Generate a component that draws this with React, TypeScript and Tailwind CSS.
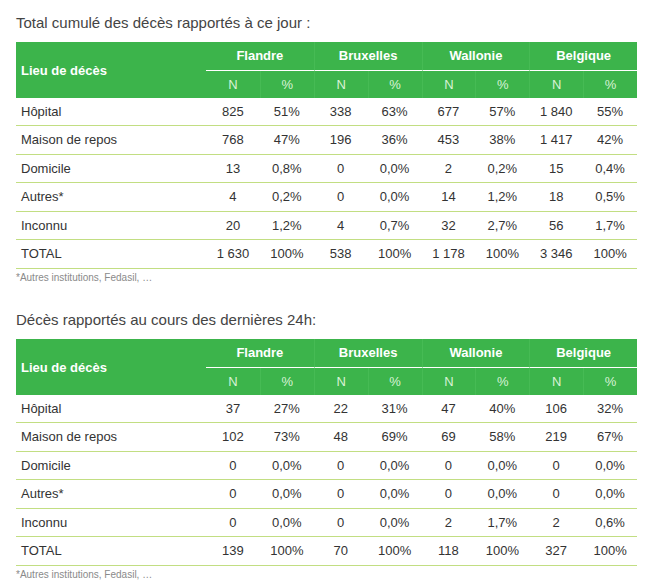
import React from "react";

type Row = { label: string; vals: string[] };

const t1: Row[] = [
  { label: "Hôpital", vals: ["825", "51%", "338", "63%", "677", "57%", "1 840", "55%"] },
  { label: "Maison de repos", vals: ["768", "47%", "196", "36%", "453", "38%", "1 417", "42%"] },
  { label: "Domicile", vals: ["13", "0,8%", "0", "0,0%", "2", "0,2%", "15", "0,4%"] },
  { label: "Autres*", vals: ["4", "0,2%", "0", "0,0%", "14", "1,2%", "18", "0,5%"] },
  { label: "Inconnu", vals: ["20", "1,2%", "4", "0,7%", "32", "2,7%", "56", "1,7%"] },
  { label: "TOTAL", vals: ["1 630", "100%", "538", "100%", "1 178", "100%", "3 346", "100%"] },
];

const t2: Row[] = [
  { label: "Hôpital", vals: ["37", "27%", "22", "31%", "47", "40%", "106", "32%"] },
  { label: "Maison de repos", vals: ["102", "73%", "48", "69%", "69", "58%", "219", "67%"] },
  { label: "Domicile", vals: ["0", "0,0%", "0", "0,0%", "0", "0,0%", "0", "0,0%"] },
  { label: "Autres*", vals: ["0", "0,0%", "0", "0,0%", "0", "0,0%", "0", "0,0%"] },
  { label: "Inconnu", vals: ["0", "0,0%", "0", "0,0%", "2", "1,7%", "2", "0,6%"] },
  { label: "TOTAL", vals: ["139", "100%", "70", "100%", "118", "100%", "327", "100%"] },
];

const regions = ["Flandre", "Bruxelles", "Wallonie", "Belgique"];

function Block({ title, rows }: { title: string; rows: Row[] }) {
  return (
    <div className="pl-[16px]">
      <div className="h-[42px] pt-[14px] text-[15px] leading-[18px] text-[#444]">{title}</div>
      <div className="grid w-[621px] grid-cols-[190px_repeat(8,minmax(0,1fr))]">
        <div className="row-span-2 flex items-center bg-[#3cb44b] pl-[5px] pt-[1px] text-[13px] font-bold text-white">
          Lieu de décès
        </div>
        {regions.map((r, i) => (
          <div
            key={r}
            className={`col-span-2 flex h-[29px] items-center justify-center border-b border-white bg-[#3cb44b] text-[13px] font-bold text-white ${
              i > 0 ? "border-l border-l-[#46bb54]" : ""
            }`}
          >
            {r}
          </div>
        ))}
        {regions.map((r, i) => (
          <React.Fragment key={r + "s"}>
            <div
              className={`flex h-[27px] items-center justify-center bg-[#3cb44b] text-[13px] text-[#d9f2d6] ${
                i > 0 ? "border-l border-l-[#46bb54]" : ""
              }`}
            >
              N
            </div>
            <div className="flex h-[27px] items-center justify-center border-l border-l-[#46bb54] bg-[#3cb44b] text-[13px] text-[#d9f2d6]">
              %
            </div>
          </React.Fragment>
        ))}
        {rows.map((row, ri) => (
          <React.Fragment key={row.label}>
            <div
              className={`flex items-center border-b border-[#c2de82] pl-[5px] text-[13px] text-[#333] ${
                ri % 2 === 0 ? "h-[28px]" : "h-[29px]"
              }`}
            >
              {row.label}
            </div>
            {row.vals.map((v, vi) => (
              <div
                key={vi}
                className={`flex items-center justify-center border-b border-[#c2de82] text-[13px] text-[#333] ${
                  ri % 2 === 0 ? "h-[28px]" : "h-[29px]"
                }`}
              >
                {v}
              </div>
            ))}
          </React.Fragment>
        ))}
      </div>
      <div className="h-[28px] pt-[3px] text-[10px] leading-[12px] text-[#8a8a8a]">*Autres institutions, Fedasil, …</div>
    </div>
  );
}

export default function App() {
  return (
    <div
      className="h-[588px] w-[650px] overflow-hidden bg-white"
      style={{ fontFamily: '"Liberation Sans", Arial, sans-serif' }}
    >
      <Block title="Total cumulé des décès rapportés à ce jour :" rows={t1} />
      <Block title="Décès rapportés au cours des dernières 24h:" rows={t2} />
    </div>
  );
}
